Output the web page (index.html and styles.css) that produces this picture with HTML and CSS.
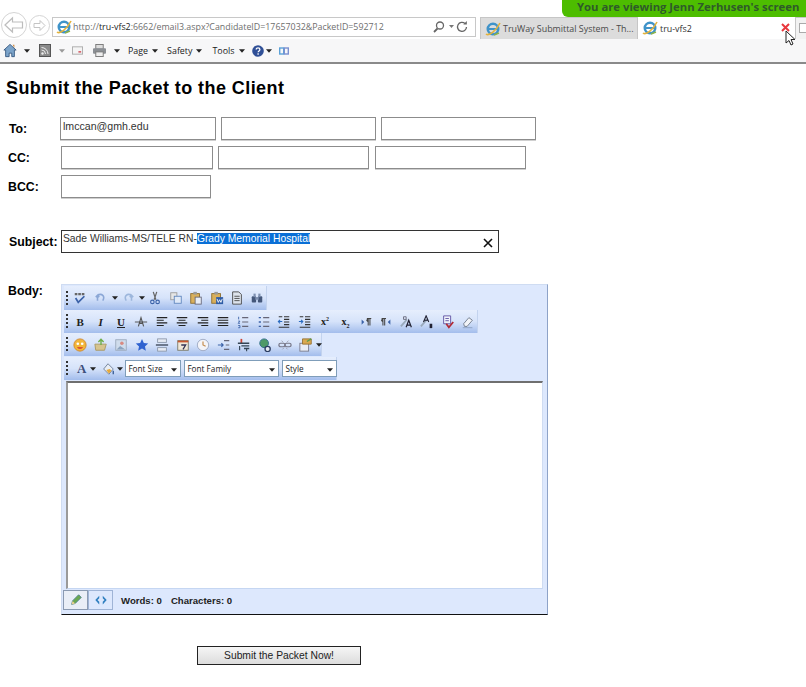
FILE: index.html
```html
<!DOCTYPE html>
<html lang="en">
<head>
<meta charset="utf-8">
<title>tru-vfs2</title>
<link rel="stylesheet" href="styles.css">
</head>
<body>
<svg class="defs" width="0" height="0" aria-hidden="true">
  <defs>
    <g id="ie">
      <circle cx="8" cy="8" r="5.2" fill="none" stroke="#3f93c9" stroke-width="2.6"/>
      <path d="M3 8h10" stroke="#3f93c9" stroke-width="2"/>
      <path d="M1 13c3 2.500 10-3 14-11" fill="none" stroke="#e3b23c" stroke-width="1.600"/>
      <path d="M9 14l5-2" stroke="#8cb24a" stroke-width="1.500"/>
    </g>
    <path id="tri" d="M0 0h7l-3.500 4z" fill="#222"/>
  </defs>
</svg>

<header class="chrome">
  <div class="nav-row">
    <div class="nav-buttons">
      <svg class="back" width="26" height="26" viewBox="0 0 26 26"><circle cx="13" cy="13" r="12.500" fill="#fff" stroke="#d4d4d4"/><path d="M4 13l7.500-7v4h10v6h-10v4z" fill="#fff" stroke="#bdbdbd" stroke-width="1.200"/></svg>
      <svg class="forward" width="21" height="21" viewBox="0 0 21 21"><circle cx="10.500" cy="10.500" r="10" fill="#fff" stroke="#d4d4d4"/><path d="M16 10.500l-5-5v3H5v4h6v3z" fill="#fff" stroke="#c4c4c4"/></svg>
    </div>
    <div class="address">
      <svg class="addr-ie" width="16" height="16" viewBox="0 0 16 16"><use href="#ie"/></svg>
      <span class="url">http://<b>tru-vfs2</b>:6662/email3.aspx?CandidateID=17657032&amp;PacketID=592712</span>
      <svg class="addr-tools" width="36" height="14" viewBox="0 0 36 14"><circle cx="7" cy="5.500" r="3.500" fill="none" stroke="#666" stroke-width="1.300"/><path d="M4.500 8.500L1 12" stroke="#666" stroke-width="1.800"/><path d="M16 5h5l-2.500 3z" fill="#777"/><path d="M33.500 7a4.500 4.500 0 1 1-1.500-3.500" fill="none" stroke="#666" stroke-width="1.300"/><path d="M33.800 1v3.500h-3.500z" fill="#666"/></svg>
    </div>
    <div class="tabs">
      <div class="tab tab-off">
        <svg width="16" height="16" viewBox="0 0 16 16"><use href="#ie"/></svg>
        <span>TruWay Submittal System - Th...</span>
      </div>
      <div class="tab tab-on">
        <svg width="16" height="16" viewBox="0 0 16 16"><use href="#ie"/></svg>
        <span>tru-vfs2</span>
        <svg class="tab-x" width="9" height="9" viewBox="0 0 9 9"><path d="M1 1l7 7M8 1L1 8" stroke="#e8383d" stroke-width="2"/></svg>
      </div>
      <div class="tab-new"><span class="tab-new-box"></span></div>
    </div>
  </div>
  <div class="cmd-row">
    <svg class="c-home" width="14" height="15" viewBox="0 0 16 16"><path d="M8 1L1 7.500h2V15h4v-4h3v4h3V7.500h2z" fill="#7ba3c9" stroke="#35577e"/><path d="M11 1.500h2V5" fill="#c9843a"/></svg>
    <svg class="c-tri" width="6" height="4" viewBox="0 0 7 4"><use href="#tri"/></svg>
    <svg class="c-rss" width="12" height="13" viewBox="0 0 12 13"><rect x=".5" y=".5" width="11" height="12" fill="#8a8a8a" stroke="#555"/><circle cx="3.500" cy="9.500" r="1.200" fill="#eee"/><path d="M2.500 6a4 4 0 0 1 4 4M2.500 3.500a6.500 6.500 0 0 1 6.500 6.500" fill="none" stroke="#eee"/></svg>
    <svg class="c-tri2" width="6" height="4" viewBox="0 0 7 4"><path d="M0 0h7l-3.500 4z" fill="#999"/></svg>
    <svg class="c-mail" width="11" height="9" viewBox="0 0 12 9"><rect x=".5" y=".5" width="11" height="8" fill="#f4f4f4" stroke="#aaa"/><path d="M7 6h3" stroke="#d0454f" stroke-width="1.500"/></svg>
    <svg class="c-print" width="13" height="13" viewBox="0 0 14 13"><rect x="3" y="0" width="8" height="5" fill="#ddd" stroke="#777"/><rect x="0" y="4" width="14" height="6" rx="1" fill="#8b8f94"/><rect x="3" y="8" width="8" height="5" fill="#eee" stroke="#777"/></svg>
    <svg class="c-tri3" width="6" height="4" viewBox="0 0 7 4"><use href="#tri"/></svg>
    <span class="menu m-page">Page</span><svg class="m-tri" width="6" height="4" viewBox="0 0 7 4"><use href="#tri"/></svg>
    <span class="menu m-safety">Safety</span><svg class="m-tri" width="6" height="4" viewBox="0 0 7 4"><use href="#tri"/></svg>
    <span class="menu m-tools">Tools</span><svg class="m-tri" width="6" height="4" viewBox="0 0 7 4"><use href="#tri"/></svg>
    <svg class="c-help" width="12" height="12" viewBox="0 0 12 12"><circle cx="6" cy="6" r="5.800" fill="#2f4f96"/><path d="M4.200 4.500c0-2.200 3.700-2.200 3.700 0 0 1.400-1.800 1.400-1.800 2.800" fill="none" stroke="#fff" stroke-width="1.300"/><rect x="5.400" y="8.300" width="1.400" height="1.400" fill="#fff"/></svg>
    <svg class="m-tri m-tri-help" width="6" height="4" viewBox="0 0 7 4"><use href="#tri"/></svg>
    <svg class="c-ext" width="10" height="8" viewBox="0 0 10 8"><rect x=".7" y="1" width="4" height="6" fill="none" stroke="#5aa1d8" stroke-width="1.400"/><rect x="5.300" y="1" width="4" height="6" fill="none" stroke="#7a8fd0" stroke-width="1.400"/></svg>
  </div>
</header>

<main class="page">
  <h1 class="title">Submit the Packet to the Client</h1>

  <div class="row row-to">
    <label class="lbl">To:</label>
    <div class="fields gap-to">
      <div class="field w-156">lmccan@gmh.edu</div>
      <div class="field w-155"></div>
      <div class="field w-155"></div>
    </div>
  </div>
  <div class="row row-cc">
    <label class="lbl">CC:</label>
    <div class="fields gap-cc">
      <div class="field w-152"></div>
      <div class="field w-151"></div>
      <div class="field w-151 cc-last"></div>
    </div>
  </div>
  <div class="row row-bcc">
    <label class="lbl">BCC:</label>
    <div class="fields">
      <div class="field w-150"></div>
    </div>
  </div>
  <div class="row row-subject">
    <label class="lbl">Subject:</label>
    <div class="field subject">
      <span>Sade Williams-MS/TELE RN-<span class="sel">Grady Memorial Hospital</span></span>
      <svg class="clear" width="10" height="10" viewBox="0 0 10 10"><path d="M1 1l8 8M9 1L1 9" stroke="#111" stroke-width="1.600"/></svg>
    </div>
  </div>

  <div class="row row-body">
    <label class="lbl">Body:</label>
    <div class="editor">
      <div class="tb tb1">
        <i class="grip"></i>
        <span class="b"><svg viewBox="0 0 16 16"><path d="M3 8l3 5 7-7" fill="none" stroke="#3b62a8" stroke-width="2"/><path d="M2 3.500h11" stroke="#666" stroke-width="2.500" stroke-dasharray="3 1"/></svg></span>
        <span class="b"><svg viewBox="0 0 16 16"><path d="M4 11V5l-2 2m2-2l2 2M4 5c5-3 9 1 6 6" fill="none" stroke="#8ba7d6" stroke-width="1.800"/></svg></span><svg class="drop" viewBox="0 0 7 4"><use href="#tri"/></svg>
        <span class="b"><svg viewBox="0 0 16 16"><path d="M12 11V5l2 2m-2-2l-2 2M12 5C7 2 3 6 6 11" fill="none" stroke="#9cb6dc" stroke-width="1.800"/></svg></span><svg class="drop" viewBox="0 0 7 4"><use href="#tri"/></svg>
        <span class="b"><svg viewBox="0 0 16 16"><path d="M6 1l3 9M10 1l-3 9" stroke="#666" stroke-width="1.400"/><circle cx="5" cy="12.500" r="2" fill="none" stroke="#3b62a8" stroke-width="1.300"/><circle cx="11" cy="12.500" r="2" fill="none" stroke="#3b62a8" stroke-width="1.300"/></svg></span>
        <span class="b"><svg viewBox="0 0 16 16"><rect x="2" y="2" width="7" height="8" fill="#e6e6e6" stroke="#999"/><rect x="6" y="6" width="8" height="8" fill="#dfe9f8" stroke="#5d84bd"/></svg></span>
        <span class="b"><svg viewBox="0 0 16 16"><rect x="2" y="3" width="10" height="11" fill="#d9b05c" stroke="#8a6a2a"/><rect x="5" y="1" width="4" height="3" fill="#999"/><rect x="7" y="7" width="7" height="8" fill="#e9eef7" stroke="#667"/></svg></span>
        <span class="b"><svg viewBox="0 0 16 16"><rect x="2" y="3" width="10" height="11" fill="#d9b05c" stroke="#8a6a2a"/><rect x="5" y="1" width="4" height="3" fill="#999"/><rect x="7" y="7" width="8" height="8" fill="#2e5ca6"/><path d="M8 9l1.500 4 1.500-3 1.500 3L14 9" fill="none" stroke="#fff"/></svg></span>
        <span class="b"><svg viewBox="0 0 16 16"><path d="M3 1h7l3 3v11H3z" fill="#dde3ec" stroke="#444"/><path d="M5 6h6M5 8.500h6M5 11h6" stroke="#444"/></svg></span>
        <span class="b"><svg viewBox="0 0 16 16"><rect x="2" y="6" width="5" height="7" rx="1" fill="#44577a"/><rect x="9" y="6" width="5" height="7" rx="1" fill="#44577a"/><rect x="4" y="3" width="2.500" height="4" fill="#7d8fb0"/><rect x="9.500" y="3" width="2.500" height="4" fill="#7d8fb0"/><rect x="6" y="7" width="4" height="3" fill="#7d8fb0"/></svg></span>
      </div>
      <div class="tb tb2">
        <i class="grip"></i>
        <span class="b"><span class="glyph g-b">B</span></span>
        <span class="b"><span class="glyph g-i">I</span></span>
        <span class="b"><span class="glyph g-u">U</span></span>
        <span class="b"><svg viewBox="0 0 16 16"><path d="M5 13l3-10 3 10M6 9.500h4" fill="none" stroke="#555" stroke-width="1.300"/><path d="M1 8h14" stroke="#444"/></svg></span>
        <span class="b"><svg viewBox="0 0 16 16"><path d="M2 3h12M2 6h8M2 9h12M2 12h8" stroke="#222" stroke-width="1.300"/></svg></span>
        <span class="b"><svg viewBox="0 0 16 16"><path d="M2 3h12M4 6h8M2 9h12M4 12h8" stroke="#222" stroke-width="1.300"/></svg></span>
        <span class="b"><svg viewBox="0 0 16 16"><path d="M2 3h12M6 6h8M2 9h12M6 12h8" stroke="#222" stroke-width="1.300"/></svg></span>
        <span class="b"><svg viewBox="0 0 16 16"><path d="M2 3h12M2 6h12M2 9h12M2 12h12" stroke="#222" stroke-width="1.300"/></svg></span>
        <span class="b"><svg viewBox="0 0 16 16"><path d="M7 3h7M7 8h7M7 13h7" stroke="#667" stroke-width="1.200"/><path d="M3 2v3M2.500 7h2l-2 2.500h2M2.500 12h2v2.500h-2" fill="none" stroke="#3b62a8"/></svg></span>
        <span class="b"><svg viewBox="0 0 16 16"><path d="M7 3h7M7 8h7M7 13h7" stroke="#667" stroke-width="1.200"/><path d="M2 3h2.500M2 8h2.500M2 13h2.500" stroke="#3b62a8" stroke-width="1.600"/></svg></span>
        <span class="b"><svg viewBox="0 0 16 16"><path d="M8 2h6M8 5h6M8 8h6M8 11h6M2 14h12M2 2h4" stroke="#333" stroke-width="1.200"/><path d="M6 7.500H1.500M3.500 5.500l-2 2 2 2" fill="none" stroke="#2a6bc0" stroke-width="1.200"/></svg></span>
        <span class="b"><svg viewBox="0 0 16 16"><path d="M8 2h6M8 5h6M8 8h6M8 11h6M2 14h12M2 2h4" stroke="#333" stroke-width="1.200"/><path d="M1 7.500h4.500M3.500 5.500l2 2-2 2" fill="none" stroke="#2a6bc0" stroke-width="1.200"/></svg></span>
        <span class="b"><span class="glyph g-x">x<sup>2</sup></span></span>
        <span class="b"><span class="glyph g-x">x<sub>2</sub></span></span>
        <span class="b"><svg viewBox="0 0 16 16"><path d="M3 5l3 3-3 3z" fill="#3b62a8"/><path d="M9 4h5M10.500 4v8M12.500 4v8" stroke="#444" stroke-width="1.200"/><path d="M10.500 4a2 2 0 0 0 0 4" fill="#444"/></svg></span>
        <span class="b"><svg viewBox="0 0 16 16"><path d="M13 5l-3 3 3 3z" fill="#3b62a8"/><path d="M3 4h5M4.500 4v8M6.500 4v8" stroke="#444" stroke-width="1.200"/><path d="M4.500 4a2 2 0 0 0 0 4" fill="#444"/></svg></span>
        <span class="b"><svg viewBox="0 0 16 16"><path d="M1 13L8 5" stroke="#9ab" stroke-width="2"/><path d="M7 14l3-8 3 8M8 11.500h4" fill="none" stroke="#223" stroke-width="1.400"/><path d="M4 2h3v3H4z" fill="none" stroke="#667"/></svg></span>
        <span class="b"><svg viewBox="0 0 16 16"><path d="M1 13L8 5" stroke="#9ab" stroke-width="2"/><path d="M4 8l3-7 3 7M5 6h4" fill="none" stroke="#223" stroke-width="1.300"/><path d="M11 10h3v5h-3z" fill="#223"/></svg></span>
        <span class="b"><svg viewBox="0 0 16 16"><path d="M3 1h8v9H3z" fill="#eef2fa" stroke="#5b4ea0"/><path d="M5 4h4M5 6.500h4" stroke="#5b4ea0"/><path d="M6 10l3 4 5-6" fill="none" stroke="#b02a37" stroke-width="2"/></svg></span>
        <span class="b"><svg viewBox="0 0 16 16"><path d="M3 10l6-7 4 3-6 7H4z" fill="#f2f4f8" stroke="#6b7686"/><path d="M2 14.500h11" stroke="#8aa0c0"/></svg></span>
      </div>
      <div class="tb tb3">
        <i class="grip"></i>
        <span class="b"><svg viewBox="0 0 16 16"><circle cx="8" cy="8" r="7" fill="#f2b63a" stroke="#d0862a"/><circle cx="5.500" cy="6.500" r="1.500" fill="#fff"/><circle cx="10.500" cy="6.500" r="1.500" fill="#fff"/><path d="M4.500 10.500c2 2.500 5 2.500 7 0z" fill="#d4342c"/></svg></span>
        <span class="b"><svg viewBox="0 0 16 16"><path d="M1 7h13l-2 7H2z" fill="#d6c48e" stroke="#a8965f"/><path d="M8 8V2M5 4.500L8 1.500l3 3" fill="none" stroke="#6fae4a" stroke-width="1.600"/></svg></span>
        <span class="b"><svg viewBox="0 0 16 16"><rect x="2" y="2" width="12" height="12" fill="#cfdcec" stroke="#9aa8bc"/><circle cx="9" cy="6" r="2" fill="#d88a82"/><path d="M3 13l4-4 6 4z" fill="#8da4bf"/></svg></span>
        <span class="b"><svg viewBox="0 0 16 16"><path d="M8 1l2.100 4.600 5 .6-3.700 3.400 1 5L8 12.100 3.600 14.600l1-5L.9 6.200l5-.6z" fill="#2f62d0"/></svg></span>
        <span class="b"><svg viewBox="0 0 16 16"><rect x="3" y="1" width="10" height="4" fill="#e6ebf3" stroke="#8a96a8"/><path d="M1 8h14" stroke="#5e6a7c" stroke-width="2"/><rect x="3" y="11" width="10" height="4" fill="#e6ebf3" stroke="#8a96a8"/></svg></span>
        <span class="b"><svg viewBox="0 0 16 16"><rect x="2" y="3" width="12" height="11" fill="#f0e8d8" stroke="#776"/><path d="M2 3h12v2H2z" fill="#c8572f"/><path d="M6 8h5l-3 5" fill="none" stroke="#335" stroke-width="1.500"/></svg></span>
        <span class="b"><svg viewBox="0 0 16 16"><circle cx="8" cy="8" r="6.500" fill="#f4f4f8" stroke="#9aa6c0"/><path d="M8 4v4l3 1.500" fill="none" stroke="#c48a4a" stroke-width="1.300"/></svg></span>
        <span class="b"><svg viewBox="0 0 16 16"><path d="M8 3h6M10 8h4M8 13h6" stroke="#667" stroke-width="1.400"/><path d="M1 8h6M5 6l2 2-2 2" fill="none" stroke="#3b62a8" stroke-width="1.300"/></svg></span>
        <span class="b"><svg viewBox="0 0 16 16"><path d="M5 1v5" stroke="#c43" stroke-width="2"/><path d="M1 6h13M5 9h9M8 12h6" stroke="#345" stroke-width="1.500"/><path d="M3 9v5M11 15v-3" stroke="#345" stroke-width="1.300"/></svg></span>
        <span class="b"><svg viewBox="0 0 16 16"><circle cx="7" cy="6" r="5" fill="#4f9a68" stroke="#2f6a8a"/><circle cx="11" cy="12.500" r="3" fill="#e6ebf4" stroke="#2a3c60" stroke-width="1.500"/></svg></span>
        <span class="b"><svg viewBox="0 0 16 16"><rect x="1" y="6" width="7" height="4" rx="2" fill="none" stroke="#778" stroke-width="1.400"/><rect x="8" y="6" width="7" height="4" rx="2" fill="none" stroke="#778" stroke-width="1.400"/><path d="M4 3l2 2M12 3l-2 2M5 13l2-2M11 13l-2-2" stroke="#99a"/></svg></span>
        <span class="b b-tight"><svg viewBox="0 0 16 16"><rect x="1" y="6" width="10" height="9" fill="#e8edf5" stroke="#778"/><path d="M4 1h10v6H4z" fill="#d9a94f" stroke="#967030"/><path d="M9 4l5-3" stroke="#5a9c50" stroke-width="1.500"/></svg></span><svg class="drop drop-tight" viewBox="0 0 7 4"><use href="#tri"/></svg>
      </div>
      <div class="tb tb4">
        <i class="grip"></i>
        <span class="glyph g-a">A</span><svg class="drop d4" viewBox="0 0 7 4"><use href="#tri"/></svg>
        <svg class="paint" viewBox="0 0 16 16"><path d="M3 8l5-6 6 6-5 6z" fill="#e8edf5" stroke="#6a7a94"/><path d="M6 9l4-1 2 2-3 3z" fill="#e6a93a"/><path d="M14 10v4" stroke="#345a94" stroke-width="1.500"/></svg><svg class="drop d4" viewBox="0 0 7 4"><use href="#tri"/></svg>
        <span class="sel-box s-size"><span>Font Size</span><svg viewBox="0 0 7 4"><use href="#tri"/></svg></span>
        <span class="sel-box s-family"><span>Font Family</span><svg viewBox="0 0 7 4"><use href="#tri"/></svg></span>
        <span class="sel-box s-style"><span>Style</span><svg viewBox="0 0 7 4"><use href="#tri"/></svg></span>
      </div>
      <div class="edit-area"></div>
      <div class="status">
        <span class="mode mode-on"><svg viewBox="0 0 16 16"><path d="M3 13l1-4 7-7 3 3-7 7z" fill="#6aa84f" stroke="#4d7f8f"/><path d="M3 13l1-4 3 3z" fill="#e8d090"/></svg></span>
        <span class="mode"><svg viewBox="0 0 16 16"><path d="M6 3L1.500 8 6 13V10L4 8l2-2zM10 3l4.500 5L10 13v-3l2-2-2-2z" fill="#2f7fc0"/></svg></span>
        <span class="count">Words: 0</span>
        <span class="count">Characters: 0</span>
      </div>
    </div>
  </div>

  <div class="actions"><button class="submit" type="button">Submit the Packet Now!</button></div>
</main>

<div class="banner">You are viewing Jenn Zerhusen's screen</div>
<svg class="cursor" width="11" height="17" viewBox="0 0 11 17"><path d="M1 1v12l3-2.500 2 4.500 2-1-2-4.500h4z" fill="#fff" stroke="#222"/></svg>
</body>
</html>
```
FILE: styles.css
```css
* { box-sizing: border-box; }
html, body { margin: 0; padding: 0; }
body {
  width: 806px;
  height: 687px;
  overflow: hidden;
  background: #fff;
  color: #000;
  font-family: "Liberation Sans", Arial, sans-serif;
  position: relative;
}
.defs { position: absolute; }
svg { flex: none; }

/* browser chrome */
.chrome { height: 64px; border-bottom: 2px solid #8a8a8a; background: #fff; }
.nav-row { display: flex; height: 39px; padding-top: 11px; align-items: flex-start; }
.nav-buttons { display: flex; align-items: center; width: 52px; height: 28px; padding-left: 1px; gap: 2px; flex: none; }
.address {
  margin-top: 6px;
  width: 424px;
  height: 20px;
  border: 1px solid #c8c8c8;
  display: flex;
  align-items: center;
  padding: 0 6px 0 3px;
  flex: none;
}
.url { font: 8.850px "Open Sans", sans-serif; color: #6e6e6e; margin-left: 1px; white-space: nowrap; flex: 1; }
.url b { font-weight: 400; color: #222; }
.tabs { display: flex; margin: 6px 0 0 4px; height: 22px; flex: none; }
.tab {
  display: flex;
  align-items: center;
  gap: 2px;
  font: 8.900px "Open Sans", sans-serif;
  color: #333;
  white-space: nowrap;
}
.tab-off { width: 158px; background: #dcdcdc; border: 1px solid #c6c6c6; border-bottom: 0; padding-left: 4px; color: #4a4a4a; }
.tab-on { width: 157px; background: #fff; padding-left: 4px; position: relative; }
.tab-x { margin-left: auto; margin-right: 5px; margin-top: -2px; }
.tab-new { width: 12px; border: 1px solid #c6c6c6; border-bottom: 0; background: #f2f2f2; padding: 5px 0 0 3px; }
.tab-new-box { display: block; width: 9px; height: 10px; border: 1px solid #aaa; background: #fff; border-right: 0; }
.cmd-row {
  height: 23px;
  background: #f7f7f8;
  display: flex;
  align-items: center;
  padding-left: 3px;
  font: 8.900px "Open Sans", sans-serif;
}
.c-tri { margin-left: 7px; }
.c-rss { margin-left: 9px; }
.c-tri2 { margin-left: 8px; }
.c-mail { margin-left: 7px; }
.c-print { margin-left: 10px; }
.c-tri3 { margin-left: 8px; }
.menu { color: #1a1a1a; white-space: nowrap; }
.m-page { margin-left: 8px; }
.m-safety { margin-left: 9px; }
.m-tools { margin-left: 10px; }
.m-tri { margin-left: 4px; }
.m-tri-help { margin-left: 2px; }
.c-help { margin-left: 7px; }
.c-ext { margin-left: 7px; }

/* page */
.page { padding: 0 0 0 6px; }
.title { font: bold 18px/22px "Liberation Sans", sans-serif; margin: 13px 0 0; letter-spacing: .43px; }
.row { display: flex; }
.lbl { width: 55px; flex: none; font: bold 12.300px "Liberation Sans", sans-serif; padding-left: 2px; white-space: nowrap; }
.fields { display: flex; }
.field {
  height: 23px;
  border: 1px solid #8c8c8c;
  box-shadow: 0 1px 0 #cfcfcf;
  font: 10.300px/1 "Liberation Sans", sans-serif;
  color: #333;
  padding: 3px 1px 2px;
  background: #fff;
}
.row-to { margin-top: 18px; }
.row-to .lbl { padding-top: 5px; padding-left: 3px; }
.row-to .field { font-size: 10.600px; padding-left: 2px; }
.gap-to { gap: 5px; margin-left: -1px; }
.gap-cc { gap: 5px; }
.cc-last { margin-left: 1px; }
.row-cc { margin-top: 6px; }
.row-cc .lbl { padding-top: 5px; }
.row-bcc { margin-top: 6px; }
.row-bcc .lbl { padding-top: 5px; }
.w-156 { width: 156px; }
.w-155 { width: 155px; }
.w-152 { width: 152px; }
.w-151 { width: 151px; }
.w-150 { width: 150px; }
.row-subject { margin-top: 32px; }
.row-subject .lbl { padding-top: 5px; padding-left: 3px; }
.subject {
  width: 438px;
  display: flex;
  justify-content: space-between;
  border-color: #333;
  box-shadow: none;
}
.sel { background: #0a6fd6; color: #fff; }
.clear { margin: 4px 4px 0 0; }
.row-body { margin-top: 31px; }

/* editor */
.editor {
  width: 487px;
  height: 331px;
  background: #dde8fd;
  border: 1px solid #cfdcf2;
  border-bottom: 1px solid #111;
  border-right: 1px solid #8ea3c8;
  padding: 1px 0 0 2px;
  display: flex;
  flex-direction: column;
  align-items: flex-start;
}
.tb {
  display: flex;
  align-items: center;
  height: 23px;
  padding: 0 2px;
  background: linear-gradient(#e6eefd 0%, #d6e3fa 50%, #a3bdec 100%);
  border-right: 1px solid #c3d3ee;
  flex: none;
}
.tb1 { height: 24px; width: 203px; }
.tb2 { width: 414px; }
.tb3 { width: 258px; }
.tb4 { width: 273px; margin-top: 1px; }
.grip { width: 2px; height: 15px; margin-right: 2px; flex: none; background: repeating-linear-gradient(#333 0 2px, transparent 2px 4px); }
.b { width: 20.420px; height: 16px; display: flex; justify-content: center; align-items: center; flex: none; }
.b svg { width: 14px; height: 14px; }
.tb3 .b { width: 20.500px; }
.drop { width: 6px; height: 4px; margin: 0 0 0 1px; }
.glyph { font-family: "Liberation Serif", serif; font-weight: bold; color: #222; }
.g-b { font-size: 11px; }
.g-i { font-size: 11px; font-style: italic; }
.g-u { font-size: 11px; text-decoration: underline; }
.g-x { font-size: 10px; line-height: 1; }
.g-x sup, .g-x sub { font-size: 6px; line-height: 0; }
.drop-tight { margin: 0; }
.g-a { font-size: 13px; color: #3e4f7c; margin-left: 7px; margin-right: 4px; }
.d4 { margin: 0 2px 0 0; }
.paint { width: 14px; height: 14px; margin-left: 3px; margin-right: 2px; }
.sel-box {
  height: 17px;
  background: #fff;
  border: 1px solid #7f9db9;
  display: flex;
  align-items: center;
  justify-content: space-between;
  font: 8.200px "Open Sans", sans-serif;
  color: #222;
  padding: 0 3px 0 2px;
  margin-right: 3px;
  flex: none;
}
.sel-box svg { width: 6px; height: 4px; margin-top: 3px; }
.s-size { width: 56px; }
.s-family { width: 95px; }
.s-style { width: 55px; margin-right: 0; }
.edit-area {
  width: 477px;
  height: 208px;
  margin: 1px 0 0 2px;
  background: #fff;
  border-top: 2px solid #6f6f6f;
  border-left: 2px solid #9a9a9a;
  border-right: 1px solid #cfdcf2;
  border-bottom: 1px solid #c5d6f2;
  flex: none;
}
.status { display: flex; align-items: center; height: 22px; width: 100%; margin-left: -1px; }
.mode { width: 25px; height: 20px; display: flex; justify-content: center; align-items: center; border: 1px solid #9fb4d6; flex: none; }
.mode svg { width: 14px; height: 14px; }
.mode-on { background: #e9eef7; border-color: #8a9ab2; }
.count { font: bold 9.600px "Liberation Sans", sans-serif; color: #222; margin-right: 9px; white-space: nowrap; }
.mode + .count { margin-left: 8px; }
.actions { padding: 30px 0 0 191px; }
.submit {
  width: 164px;
  height: 19px;
  padding: 0;
  border: 1px solid #222;
  background: linear-gradient(#f6f6f6, #dcdcdc);
  font: 10.300px "Liberation Sans", sans-serif;
  color: #222;
}

/* overlays */
.banner {
  position: absolute;
  top: 0;
  left: 562px;
  width: 244px;
  height: 17px;
  background: #4dbd00;
  border-radius: 0 0 0 6px;
  color: #2f5a2a;
  font: bold 11.300px/14px "Open Sans", sans-serif;
  padding-left: 15px;
  white-space: nowrap;
}
.cursor { position: absolute; left: 785px; top: 30px; }
```
